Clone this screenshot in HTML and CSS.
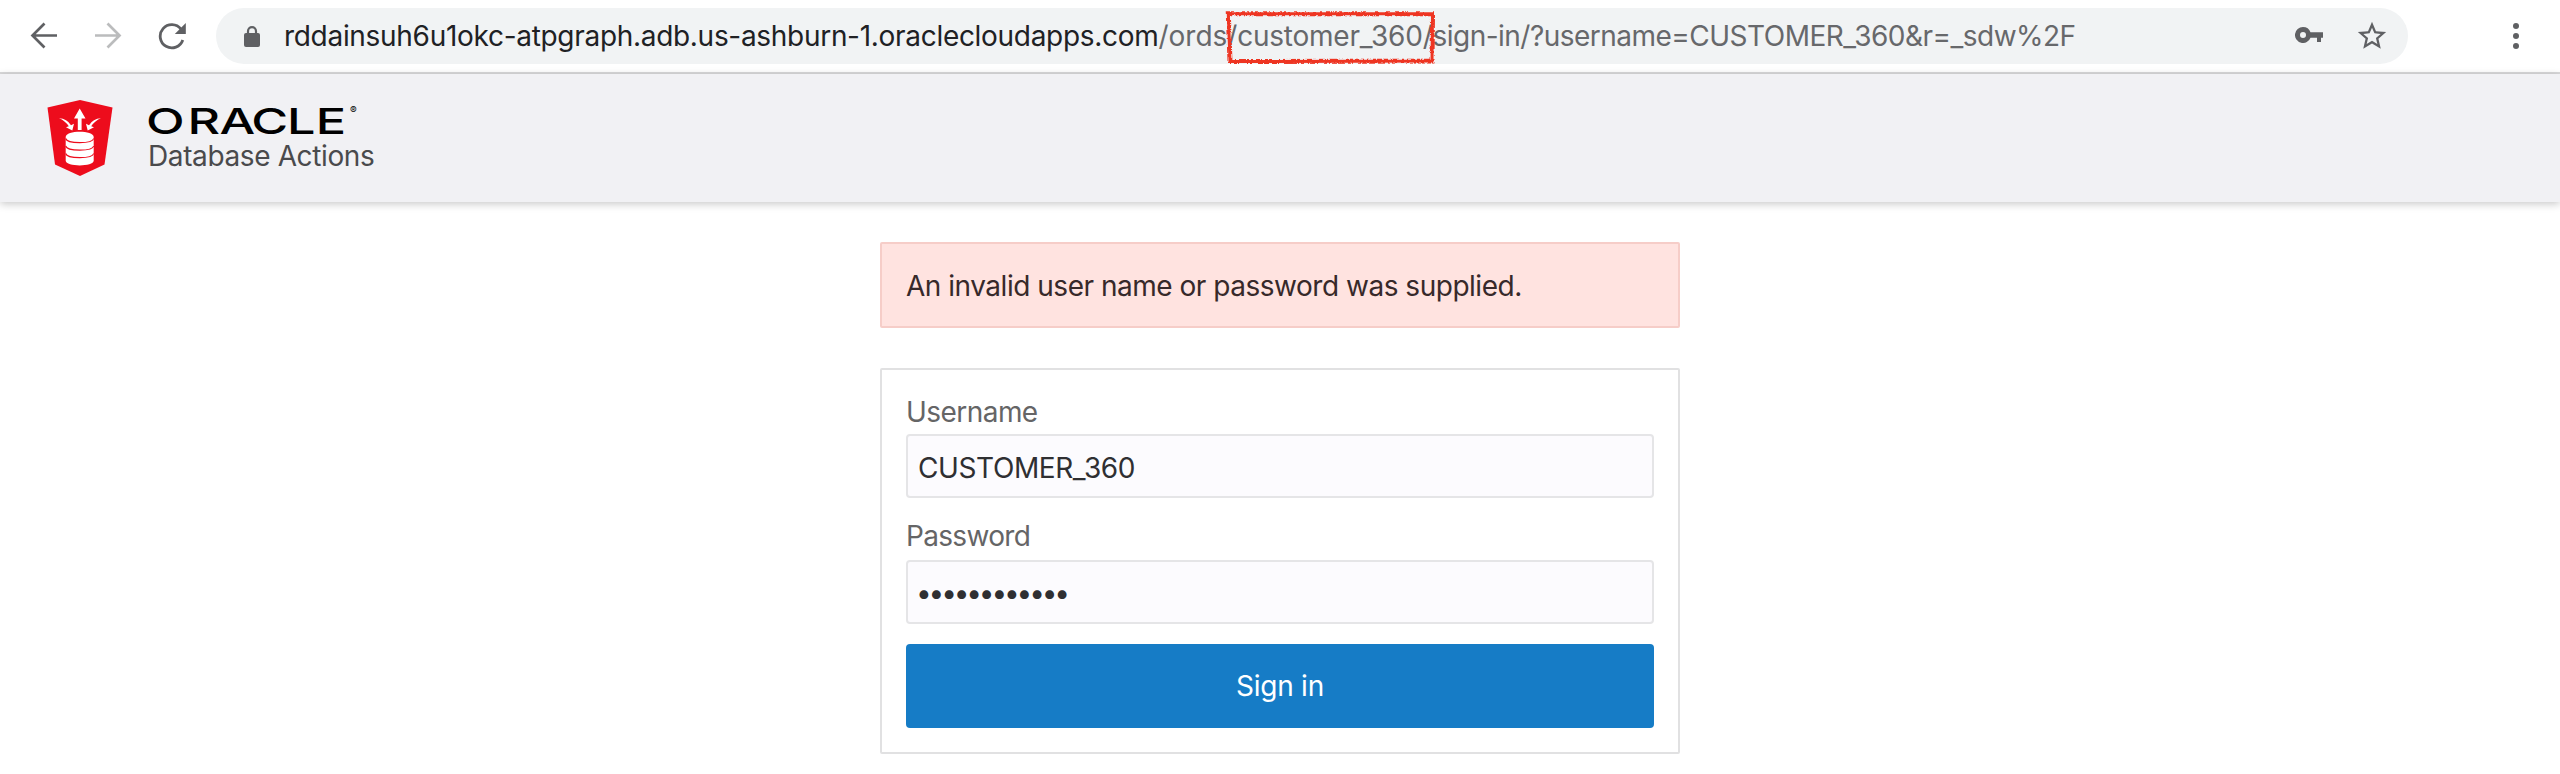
FILE: index.html
```
<!DOCTYPE html>
<html lang="en">
<head>
<meta charset="utf-8">
<title>Database Actions</title>
<link rel="stylesheet" href="styles.css">
</head>
<body>
<div class="browser-bar">
  <svg class="nav-icon nav-back" viewBox="0 0 28 28"><path d="M27 13.500H3M14.500 1.500L2.500 13.500L14.500 25.500"/></svg>
  <svg class="nav-icon nav-forward" viewBox="0 0 28 28"><path d="M1 13.500H25M13.500 1.500L25.500 13.500L13.500 25.500"/></svg>
  <svg class="reload-icon" viewBox="0 0 28 28"><path class="reload-arc" d="M23 7.200A11.600 11.600 0 1 0 24.800 18"/><path class="reload-head" d="M27.800 1V12H16.800Z"/></svg>
  <div class="address-bar">
    <svg class="lock-icon" viewBox="0 0 16 21"><path d="M4 8V5.200a4 4 0 0 1 8 0V8"/><rect x="0" y="7" width="16" height="14" rx="2"/></svg>
    <div class="url"><span class="url-host">rddainsuh6u1okc-atpgraph.adb.us-ashburn-1.oraclecloudapps.com</span><span class="url-root">/ords</span><span class="url-schema">/customer_360/<svg class="marker" viewBox="0 0 210 54"><filter id="rough"><feTurbulence baseFrequency="0.25" numOctaves="2"/><feDisplacementMap in="SourceGraphic" scale="2"/></filter><path filter="url(#rough)" d="M2.800 3.200L207 3.200L206.500 50.500L4.500 51Z"/></svg></span><span class="url-rest">sign-in/?username=CUSTOMER_360&amp;r=_sdw%2F</span></div>
    <svg class="key-icon" viewBox="0 0 28 16"><path fill-rule="evenodd" d="M8 0a8 8 0 1 0 7.500 10.700H22V15h4v-4.300h2V5.300H15.500A8 8 0 0 0 8 0zM8 5a3 3 0 1 1 0 6a3 3 0 0 1 0-6z"/></svg>
    <svg class="star-icon" viewBox="0 0 24 24"><path d="M22 9.240l-7.190-.62L12 2 9.190 8.630 2 9.240l5.460 4.730L5.820 21 12 17.270 18.180 21l-1.630-7.030L22 9.240zM12 15.400l-3.760 2.270 1-4.280-3.320-2.880 4.380-.38L12 6.100l1.710 4.040 4.380.38-3.320 2.880 1 4.280L12 15.400z"/></svg>
  </div>
  <svg class="menu-icon" viewBox="0 0 6 26"><circle cx="3" cy="3" r="3"/><circle cx="3" cy="13" r="3"/><circle cx="3" cy="23" r="3"/></svg>
</div>
<header class="app-header">
  <svg class="shield" viewBox="0 0 66 76">
    <path fill="#ed0c1c" d="M33 0L65.500 7.500L57.500 64.500L33 76L8 64.500L0.500 7.500Z"/>
    <g fill="#fff"><path d="M32.700 8.500L38.500 18.500H34.600V30H30.800V18.500H27Z"/>
    <path d="M12 18.200Q20 18.500 24 25.200L27 23.800L25.300 30.500L19 27.300L21.800 26.200Q18 20.500 12 18.200Z"/>
    <path d="M54 18.200Q46 18.500 42 25.200L39 23.800L40.700 30.500L47 27.300L44.200 26.200Q48 20.500 54 18.200Z"/>
    <path d="M18.700 37C18.700 30 46.700 30 46.700 37V60.500C46.700 67 18.700 67 18.700 60.500Z"/></g>
    <g fill="none" stroke="#ed0c1c" stroke-width="1.100"><path d="M18.700 38.500C20 44 45.500 44 46.700 38.500M18.700 46C20 51.500 45.500 51.500 46.700 46M18.700 53.500C20 59 45.500 59 46.700 53.500"/></g>
  </svg>
  <div class="brand">
    <svg class="wordmark" viewBox="0 0 212 30"><text class="wordmark-name" transform="scale(1.4 1)" x="-1.500 28.300 51 73.800 99.300 119.800" y="27.600">ORACLE</text><text class="wordmark-reg" x="202" y="8">®</text></svg>
    <div class="product">Database Actions</div>
  </div>
</header>
<main class="login">
  <div class="alert">An invalid user name or password was supplied.</div>
  <form class="card">
    <label class="label">Username</label>
    <div class="field">CUSTOMER_360</div>
    <label class="label label-password">Password</label>
    <div class="field field-password">••••••••••••</div>
    <button class="submit" type="button">Sign in</button>
  </form>
</main>
</body>
</html>
```
FILE: styles.css
```
* { box-sizing: border-box; }
body {
  margin: 0;
  height: 774px;
  overflow: hidden;
  background: #fff;
  font-family: Inter, "Liberation Sans", sans-serif;
  font-size: 28px;
}
.browser-bar {
  display: flex;
  align-items: center;
  height: 74px;
  padding: 0 41px 0 30px;
  border-bottom: 2px solid #d9d9da;
}
.nav-icon { width: 28px; height: 28px; fill: none; stroke: #5f6063; stroke-width: 2.7; }
.nav-forward { margin-left: 36px; stroke: #bbbcbd; }
.reload-icon { width: 28px; height: 28px; margin-left: 36px; }
.reload-arc { fill: none; stroke: #5f6063; stroke-width: 2.8; }
.reload-head { fill: #5f6063; }
.address-bar {
  display: flex;
  align-items: center;
  width: 2192px;
  height: 56px;
  margin-left: 30px;
  padding: 0 19px 0 28px;
  border-radius: 28px;
  background: #f1f3f4;
}
.lock-icon { width: 16px; height: 21px; fill: #5f6063; }
.lock-icon path { fill: none; stroke: #5f6063; stroke-width: 2.2; }
.url { flex: 1; margin-left: 24px; color: #67686b; line-height: 56px; white-space: nowrap; }
.url-host { color: #202124; letter-spacing: -.3px; }
.url-schema { position: relative; letter-spacing: -.23px; }
.url-rest { letter-spacing: -.52px; }
.marker { position: absolute; left: -2px; top: -9px; width: 210px; height: 54px; overflow: visible; fill: none; stroke: #ee3524; stroke-width: 4; }
.key-icon { width: 28px; height: 16px; margin-bottom: 2px; fill: #5f6063; }
.star-icon { width: 34px; height: 34px; margin-left: 32px; fill: #5f6063; }
.menu-icon { width: 6px; height: 26px; margin-left: auto; fill: #5f6063; }
.app-header {
  display: flex;
  height: 128px;
  padding: 26px 0 0 47px;
  background: #f1f1f4;
  box-shadow: 0 2px 8px rgba(0, 0, 0, .22);
}
.shield { width: 66px; height: 76px; }
.brand { margin: 6px 0 0 35px; }
.wordmark { display: block; width: 212px; height: 30px; overflow: visible; }
.wordmark-name { font: 500 36px Inter, sans-serif; }
.wordmark-reg { font: 10px Inter, sans-serif; }
.product { margin-top: 2px; color: #4a4a4c; line-height: 36px; letter-spacing: -.38px; }
.login { width: 800px; margin: 40px auto 0; }
.alert {
  height: 86px;
  padding-left: 24px;
  border: 2px solid #f6cdc8;
  border-radius: 2px;
  background: #ffe3e0;
  color: #37292a;
  line-height: 84px;
  letter-spacing: -.48px;
}
.card {
  height: 386px;
  margin-top: 40px;
  padding: 24px 24px 0;
  border: 2px solid #e1e1e2;
  border-radius: 2px;
}
.label { display: block; height: 40px; line-height: 36px; color: #656566; letter-spacing: -.55px; }
.label-password { margin-top: 20px; height: 42px; letter-spacing: -.68px; }
.field {
  height: 64px;
  padding-left: 10px;
  border: 2px solid #e5e5e7;
  border-radius: 4px;
  background: #fcfbfe;
  color: #2f2f32;
  line-height: 64px;
  letter-spacing: -.4px;
}
.field-password { padding-left: 8px; letter-spacing: -3.18px; line-height: 62px; }
.submit {
  display: block;
  width: 100%;
  height: 84px;
  margin-top: 20px;
  border: 0;
  border-radius: 4px;
  background: #167cc6;
  color: #fff;
  font: inherit;
  letter-spacing: -.25px;
}
```
